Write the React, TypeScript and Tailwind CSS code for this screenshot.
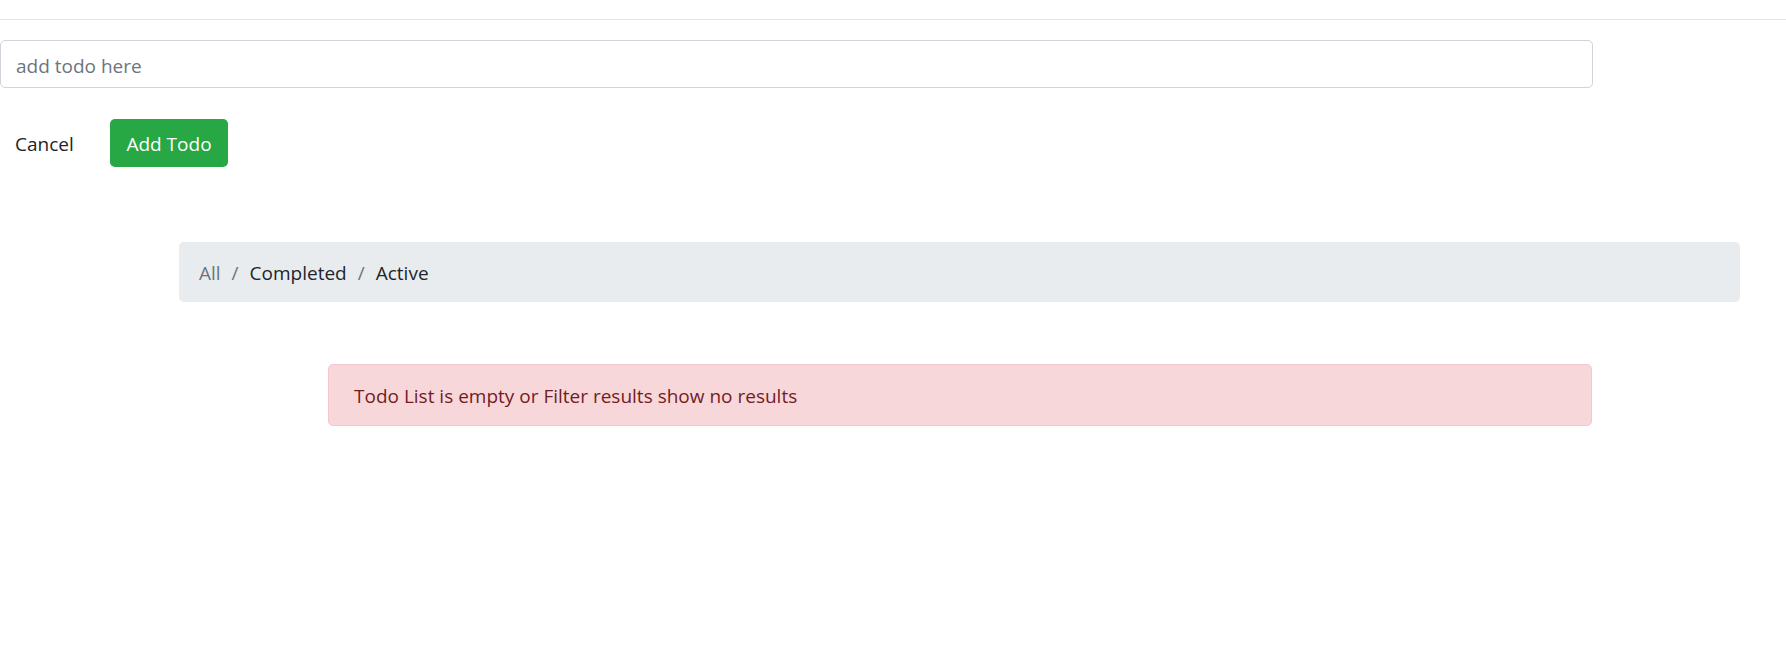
export default function App() {
  return (
    <div className="min-h-screen bg-white font-['Open_Sans','Noto_Sans',sans-serif] text-[19px] leading-[30px] text-[#212529]">
      <div className="h-[20px] border-b border-[#e5e5e5]" />

      <div className="mt-[20px] w-[1593px]">
        <input
          type="text"
          placeholder="add todo here"
          className="block h-[48px] w-full rounded-[5px] border border-[#ced4da] bg-white px-[15px] pt-[3px] text-[19px] text-[#495057] placeholder:text-[#6c757d] outline-none"
        />
      </div>

      <div className="mt-[31px] flex items-center gap-[22px]">
        <button className="h-[48px] w-[88px] rounded-[5px] px-[15px] pt-[2px] text-left text-[19px] text-[#212529]">Cancel</button>
        <button className="h-[48px] w-[118px] rounded-[5px] bg-[#28a745] pt-[2px] text-center text-[19px] text-white">Add Todo</button>
      </div>

      <nav className="ml-[179px] mt-[75px] w-[1561px] rounded-[5px] bg-[#e9ecef] px-[20px] pb-[14px] pt-[16px]">
        <ol className="flex items-center">
          <li className="text-[#6c757d]">All</li>
          <li className="px-[11px] text-[#6c757d]">/</li>
          <li>Completed</li>
          <li className="px-[11px] text-[#6c757d]">/</li>
          <li>Active</li>
        </ol>
      </nav>

      <div className="ml-[328px] mt-[62px] w-[1264px] rounded-[5px] border border-[#f5c6cb] bg-[#f8d7da] px-[25px] pb-[14px] pt-[16px] text-[#721c24]">
        Todo List is empty or Filter results show no results
      </div>
    </div>
  );
}
